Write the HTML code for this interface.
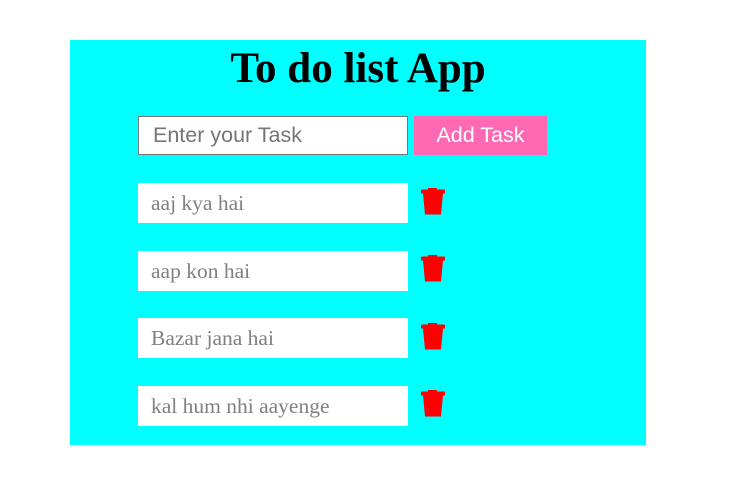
<!DOCTYPE html>
<html><head><style>
body{margin:0;background:#fff;width:734px;height:501px;position:relative;overflow:hidden}
.panel{position:absolute;left:70px;top:40px;width:576px;height:405px;background:#00ffff}
h1{position:absolute;left:0;width:576px;top:0;margin:0;text-align:center;font:bold 43px/1 "Liberation Serif",serif;padding-top:7px;}
.inp{position:absolute;left:138px;top:116px;height:37px;border:1px solid #767676;background:#fff;font:21.5px "Liberation Sans",sans-serif;color:#757575;line-height:37px;padding-left:14px;width:254px}
.btn{position:absolute;left:414px;top:116px;width:133px;height:39px;background:#ff69b4;color:#fff;font:21.5px "Liberation Sans",sans-serif;line-height:39px;text-align:center}
.item{position:absolute;left:138px;width:257px;padding-left:13px;height:40px;background:#fff;font:21.5px "Liberation Serif",serif;color:#808080;line-height:40px}
.tr{position:absolute;left:420px;width:26px;height:28px}
</style></head><body>
<div class="panel"><h1>To do list App</h1></div>
<div class="inp">Enter your Task</div>
<div class="btn">Add Task</div>
<div class="item" style="top:183px">aaj kya hai</div>
<div class="item" style="top:251px">aap kon hai</div>
<div class="item" style="top:318px">Bazar jana hai</div>
<div class="item" style="top:386px">kal hum nhi aayenge</div>
<svg class="tr" style="top:187px" viewBox="0 0 26 28"><path d="M8 1h9v2H8zM2 2.5h22a1 1 0 0 1 1 1v3H1v-3a1 1 0 0 1 1-1zM3 6.5h20l-2 21H5z" fill="#f00"/></svg>
<svg class="tr" style="top:254px" viewBox="0 0 26 28"><path d="M8 1h9v2H8zM2 2.5h22a1 1 0 0 1 1 1v3H1v-3a1 1 0 0 1 1-1zM3 6.5h20l-2 21H5z" fill="#f00"/></svg>
<svg class="tr" style="top:322px" viewBox="0 0 26 28"><path d="M8 1h9v2H8zM2 2.5h22a1 1 0 0 1 1 1v3H1v-3a1 1 0 0 1 1-1zM3 6.5h20l-2 21H5z" fill="#f00"/></svg>
<svg class="tr" style="top:389px" viewBox="0 0 26 28"><path d="M8 1h9v2H8zM2 2.5h22a1 1 0 0 1 1 1v3H1v-3a1 1 0 0 1 1-1zM3 6.5h20l-2 21H5z" fill="#f00"/></svg>
</body></html>
